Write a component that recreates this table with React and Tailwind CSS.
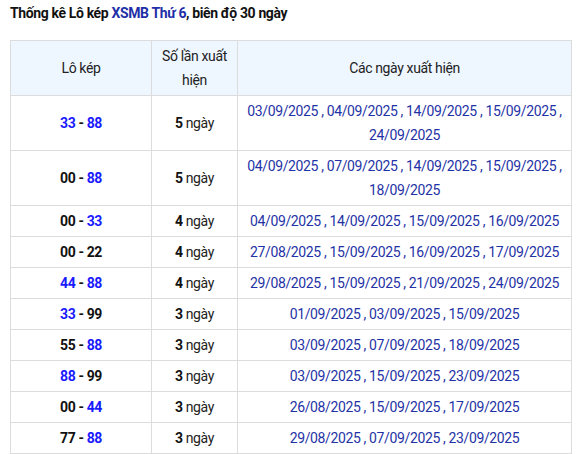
const rows = [
  { a: '33', b: '88', aBlue: true, bBlue: true, n: 5, dates: ['03/09/2025', '04/09/2025', '14/09/2025', '15/09/2025', '24/09/2025'] },
  { a: '00', b: '88', aBlue: false, bBlue: true, n: 5, dates: ['04/09/2025', '07/09/2025', '14/09/2025', '15/09/2025', '18/09/2025'] },
  { a: '00', b: '33', aBlue: false, bBlue: true, n: 4, dates: ['04/09/2025', '14/09/2025', '15/09/2025', '16/09/2025'] },
  { a: '00', b: '22', aBlue: false, bBlue: false, n: 4, dates: ['27/08/2025', '15/09/2025', '16/09/2025', '17/09/2025'] },
  { a: '44', b: '88', aBlue: true, bBlue: true, n: 4, dates: ['29/08/2025', '15/09/2025', '21/09/2025', '24/09/2025'] },
  { a: '33', b: '99', aBlue: true, bBlue: false, n: 3, dates: ['01/09/2025', '03/09/2025', '15/09/2025'] },
  { a: '55', b: '88', aBlue: false, bBlue: true, n: 3, dates: ['03/09/2025', '07/09/2025', '18/09/2025'] },
  { a: '88', b: '99', aBlue: true, bBlue: false, n: 3, dates: ['03/09/2025', '15/09/2025', '23/09/2025'] },
  { a: '00', b: '44', aBlue: false, bBlue: true, n: 3, dates: ['26/08/2025', '15/09/2025', '17/09/2025'] },
  { a: '77', b: '88', aBlue: false, bBlue: true, n: 3, dates: ['29/08/2025', '07/09/2025', '23/09/2025'] },
];

export default function App() {
  return (
    <div className="bg-white px-[10px] pt-[2px] text-[#222] tracking-[-0.37px] font-['Roboto',sans-serif]">
      <h1 className="text-[14px] font-bold leading-[22px] text-[#111]">
        Thống kê Lô kép <span className="text-[#1f2fa8]">XSMB Thứ 6</span>, biên độ 30 ngày
      </h1>
      <table className="mt-[16px] w-[562px] border-collapse text-[14px] leading-[24px]">
        <thead>
          <tr className="bg-[#eef6ff]">
            <th className="w-[141px] border border-[#dcdcdc] px-2 py-[3px] font-normal">Lô kép</th>
            <th className="w-[86px] border border-[#dcdcdc] px-2 py-[3px] font-normal">Số lần xuất hiện</th>
            <th className="border border-[#dcdcdc] px-2 py-[3px] font-normal">Các ngày xuất hiện</th>
          </tr>
        </thead>
        <tbody>
          {rows.map((r, i) => (
            <tr key={i}>
              <td className="border border-[#dcdcdc] px-2 py-[3px] text-center font-bold text-[#111]">
                <span className={r.aBlue ? 'text-[#1a1aff]' : ''}>{r.a}</span>
                {' - '}
                <span className={r.bBlue ? 'text-[#1a1aff]' : ''}>{r.b}</span>
              </td>
              <td className="border border-[#dcdcdc] px-2 py-[3px] text-center">
                <b className="text-[#111]">{r.n}</b> ngày
              </td>
              <td className="border border-[#dcdcdc] px-2 py-[3px] text-center text-[#1f33a6]">
                {r.dates.join(' , ')}
              </td>
            </tr>
          ))}
        </tbody>
      </table>
    </div>
  );
}
